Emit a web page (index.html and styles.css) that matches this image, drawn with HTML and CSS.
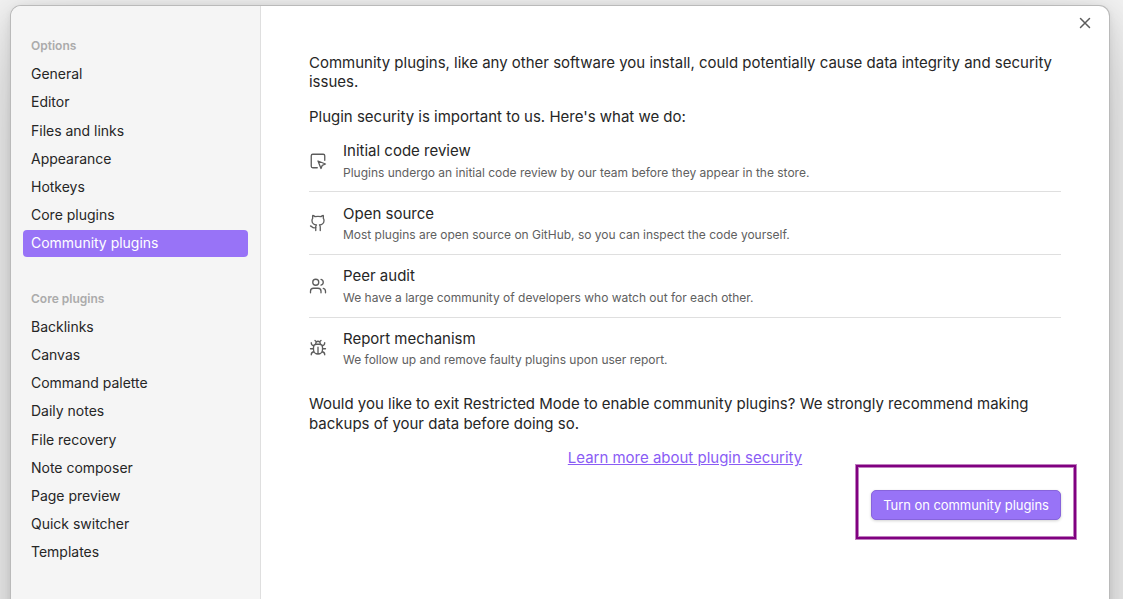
FILE: index.html
```html
<!DOCTYPE html>
<html lang="en">
<head>
<meta charset="utf-8">
<title>Community plugins</title>
<link rel="stylesheet" href="styles.css">
</head>
<body>
<div class="modal">
  <nav class="sidebar">
    <section class="group">
      <h2 class="group-title">Options</h2>
      <a class="nav-item">General</a>
      <a class="nav-item">Editor</a>
      <a class="nav-item">Files and links</a>
      <a class="nav-item">Appearance</a>
      <a class="nav-item">Hotkeys</a>
      <a class="nav-item">Core plugins</a>
      <a class="nav-item active">Community plugins</a>
    </section>
    <section class="group">
      <h2 class="group-title">Core plugins</h2>
      <a class="nav-item">Backlinks</a>
      <a class="nav-item">Canvas</a>
      <a class="nav-item">Command palette</a>
      <a class="nav-item">Daily notes</a>
      <a class="nav-item">File recovery</a>
      <a class="nav-item">Note composer</a>
      <a class="nav-item">Page preview</a>
      <a class="nav-item">Quick switcher</a>
      <a class="nav-item">Templates</a>
    </section>
  </nav>
  <main class="content">
    <p class="text">Community plugins, like any other software you install, could potentially cause data integrity and security issues.</p>
    <p class="text">Plugin security is important to us. Here's what we do:</p>
    <div class="features">
      <div class="feature">
        <svg class="icon" viewBox="0 0 24 24"><path d="M21 11V5a2 2 0 0 0-2-2H5a2 2 0 0 0-2 2v14c0 1.100.9 2 2 2h6"/><path d="m12 12 4 10 1.700-4.300L22 16Z"/></svg>
        <div><div class="name">Initial code review</div><div class="desc">Plugins undergo an initial code review by our team before they appear in the store.</div></div>
      </div>
      <div class="feature">
        <svg class="icon" viewBox="0 0 24 24"><path d="M15 22v-4a4.800 4.800 0 0 0-1-3.500c3 0 6-2 6-5.500.080-1.250-.270-2.480-1-3.500.280-1.150.280-2.350 0-3.500 0 0-1 0-3 1.500-2.640-.5-5.360-.5-8 0C6 2 5 2 5 2c-.3 1.150-.3 2.350 0 3.500A5.403 5.403 0 0 0 4 9c0 3.500 3 5.500 6 5.500-.390.490-.680 1.050-.850 1.650-.170.600-.220 1.230-.150 1.850v4"/><path d="M9 18c-4.510 2-5-2-7-2"/></svg>
        <div><div class="name">Open source</div><div class="desc">Most plugins are open source on GitHub, so you can inspect the code yourself.</div></div>
      </div>
      <div class="feature">
        <svg class="icon" viewBox="0 0 24 24"><path d="M16 21v-2a4 4 0 0 0-4-4H6a4 4 0 0 0-4 4v2"/><circle cx="9" cy="7" r="4"/><path d="M22 21v-2a4 4 0 0 0-3-3.870M16 3.130a4 4 0 0 1 0 7.750"/></svg>
        <div><div class="name">Peer audit</div><div class="desc">We have a large community of developers who watch out for each other.</div></div>
      </div>
      <div class="feature">
        <svg class="icon" viewBox="0 0 24 24"><path d="m8 2 1.880 1.880M14.120 3.880 16 2M9 7.130v-1a3.003 3.003 0 1 1 6 0v1"/><path d="M12 20c-3.300 0-6-2.700-6-6v-3a4 4 0 0 1 4-4h4a4 4 0 0 1 4 4v3c0 3.300-2.700 6-6 6M12 20v-9M6.530 9C4.600 8.800 3 7.100 3 5M6 13H2M3 21c0-2.100 1.700-3.900 3.800-4M20.970 5c0 2.100-1.600 3.800-3.500 4M22 13h-4M17.200 17c2.100.1 3.800 1.900 3.800 4"/></svg>
        <div><div class="name">Report mechanism</div><div class="desc">We follow up and remove faulty plugins upon user report.</div></div>
      </div>
    </div>
    <p class="text">Would you like to exit Restricted Mode to enable community plugins? We strongly recommend making backups of your data before doing so.</p>
    <p class="text centered"><a class="link">Learn more about plugin security</a></p>
    <div class="actions"><div class="highlight"><button class="cta">Turn on community plugins</button></div></div>
  </main>
  <svg class="close" viewBox="0 0 24 24"><path d="M18 6 6 18M6 6l12 12"/></svg>
</div>
</body>
</html>
```
FILE: styles.css
```css
* { box-sizing: border-box; }
body {
  margin: 0;
  height: 599px;
  overflow: hidden;
  padding: 6px 14px 0 11px;
  background: #f3f3f3;
  font-family: Inter, sans-serif;
  color: #262626;
}
.modal {
  position: relative;
  display: flex;
  height: 680px;
  border-radius: 10px;
  background: #fff;
  box-shadow:
    0 0 0 1px #bababa,
    0 1.8px 7.3px rgba(0, 0, 0, .071),
    0 6.3px 24.7px rgba(0, 0, 0, .112),
    0 30px 90px rgba(0, 0, 0, .2);
}
.sidebar {
  width: 250px;
  flex: none;
  padding: 32px 12px 0;
  background: #f5f5f5;
  border-right: 1px solid #dfdfdf;
  border-radius: 10px 0 0 10px;
}
.group { margin-bottom: 34px; }
.group-title {
  margin: 0 0 7.6px;
  padding: 0 8px;
  font-size: 12px;
  line-height: 15.6px;
  font-weight: 600;
  color: #ababab;
}
.nav-item {
  display: block;
  margin-bottom: 2px;
  padding: 4px 8px;
  border-radius: 4px;
  font-size: 14px;
  line-height: 18.2px;
  letter-spacing: -.01px;
}
.active { background: #9873f7; color: #fff; }
.content { flex: 1; padding: 46.6px 48px; }
.text {
  margin: 0 0 15px;
  font-size: 15px;
  line-height: 19.5px;
  letter-spacing: -.01px;
}
.features { margin-bottom: 26.4px; }
.feature {
  display: flex;
  align-items: center;
  gap: 16px;
  padding: 11.25px 0;
  border-top: 1px solid #dfdfdf;
}
.feature:first-child { padding-top: 0; border-top: 0; }
.feature:last-child { padding-bottom: 0; }
.icon {
  width: 18px;
  height: 18px;
  flex: none;
  fill: none;
  stroke: #5c5c5c;
  stroke-width: 1.75;
  stroke-linecap: round;
  stroke-linejoin: round;
}
.name { font-size: 15px; line-height: 19.5px; }
.desc {
  padding-top: 4px;
  font-size: 12px;
  line-height: 15.6px;
  letter-spacing: -.01px;
  color: #606060;
}
.centered { text-align: center; }
.link { color: #8a5cf5; text-decoration: underline; }
.actions { display: flex; justify-content: flex-end; }
.highlight {
  margin: -17.9px -15px 0 0;
  padding: 23px 13px 17px;
  border: 2px solid #800080;
  box-shadow: 0 0 0 1px rgba(128, 0, 128, .5), inset 0 0 0 1px rgba(128, 0, 128, .5);
}
.cta {
  display: block;
  width: 190px;
  height: 30px;
  padding: 0;
  border: 1px solid #8764dc;
  border-radius: 5px;
  background: #9873f7;
  box-shadow: 0 1px 3px rgba(0, 0, 0, .18);
  color: #fff;
  font: 13px Inter, sans-serif;
  letter-spacing: -.06px;
}
.close {
  position: absolute;
  top: 8px;
  right: 15px;
  width: 18px;
  height: 18px;
  fill: none;
  stroke: #5c5c5c;
  stroke-width: 2;
  stroke-linecap: round;
}
```
